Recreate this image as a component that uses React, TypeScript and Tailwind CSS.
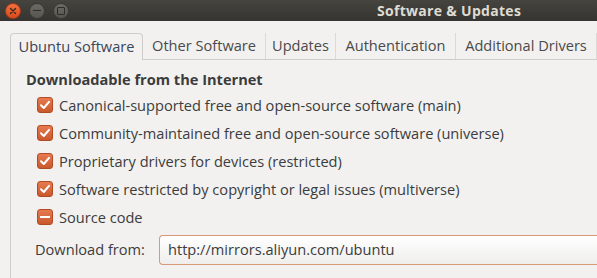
import React from 'react';

const sources = [
  { label: 'Canonical-supported free and open-source software (main)', state: 'checked' },
  { label: 'Community-maintained free and open-source software (universe)', state: 'checked' },
  { label: 'Proprietary drivers for devices (restricted)', state: 'checked' },
  { label: 'Software restricted by copyright or legal issues (multiverse)', state: 'checked' },
  { label: 'Source code', state: 'mixed' },
];

const tabs = [
  { label: 'Other Software', w: 'w-[123px]' },
  { label: 'Updates', w: 'w-[70px]' },
  { label: 'Authentication', w: 'w-[120px]' },
  { label: 'Additional Drivers', w: 'w-[141px]' },
];

function CheckBox({ state }: { state: string }) {
  return (
    <div className="w-4 h-4 rounded-[3px] border border-[#b24b22] bg-gradient-to-b from-[#e77a50] to-[#c9582c] flex items-center justify-center shrink-0">
      {state === 'checked' ? (
        <svg width="12" height="12" viewBox="0 0 12 12">
          <path d="M2 6.2 L4.8 9 L10 2.8" fill="none" stroke="#fff" strokeWidth="2" strokeLinecap="round" strokeLinejoin="round" />
        </svg>
      ) : (
        <div className="w-[10px] h-[2px] bg-white" />
      )}
    </div>
  );
}

export default function App() {
  return (
    <div className="w-[597px] h-[278px] overflow-hidden bg-[#f2f1f0] text-[#3c3c3c]" style={{ fontFamily: '"Open Sans", "DejaVu Sans", sans-serif' }}>
      {/* Title bar */}
      <div className="h-[21px] bg-gradient-to-b from-[#45443f] to-[#353430] flex items-center relative">
        <div className="flex items-center gap-[8px] pl-[5px]">
          <div className="w-4 h-4 rounded-full bg-gradient-to-b from-[#f0703f] to-[#dc4a18] border border-[#a8391a] flex items-center justify-center">
            <svg width="8" height="8" viewBox="0 0 8 8">
              <path d="M1.5 1.5 L6.5 6.5 M6.5 1.5 L1.5 6.5" stroke="#3a2a24" strokeWidth="1.4" strokeLinecap="round" />
            </svg>
          </div>
          <div className="w-4 h-4 rounded-full bg-gradient-to-b from-[#6b6a66] to-[#56554f] border border-[#3a3935] flex items-center justify-center">
            <div className="w-[8px] h-[1.5px] bg-[#2e2d29]" />
          </div>
          <div className="w-4 h-4 rounded-full bg-gradient-to-b from-[#6b6a66] to-[#56554f] border border-[#3a3935] flex items-center justify-center">
            <div className="w-[8px] h-[8px] border-[1.5px] border-[#2e2d29] rounded-[1px]" />
          </div>
        </div>
        <div className="absolute left-[377px] top-0 h-full flex items-center text-[14px] font-bold text-[#dfdbd2] tracking-[0.3px]">
          Software &amp; Updates
        </div>
      </div>

      {/* Tabs */}
      <div className="pl-[10px] pt-[13px]">
        <div className="flex items-end h-[26px] border-b border-[#cfcdca]">
          <div className="w-[133px] h-[27px] -mb-px bg-[#f2f1f0] border border-b-0 border-[#cfcdca] rounded-t-[4px] flex items-center justify-center text-[14.6px] text-[#3a4658]">
            Ubuntu Software
          </div>
          {tabs.map((t) => (
            <div key={t.label} className={`${t.w} h-[26px] border-r border-[#dcdad6] flex items-center justify-center text-[14.6px] text-[#4a4a4a] shrink-0`}>
              {t.label}
            </div>
          ))}
        </div>

        {/* Panel */}
        <div className="border-l border-[#cfcdca] h-[220px] pl-[15px] pt-[10px]">
          <div className="font-bold text-[14.6px] text-[#3c3c3c] h-[18px] leading-[18px]">Downloadable from the Internet</div>
          <div className="pl-[11px] pt-[9px] flex flex-col gap-[12px]">
            {sources.map((s) => (
              <div key={s.label} className="flex items-center gap-[6px] h-4 text-[14.6px]">
                <CheckBox state={s.state} />
                <span className="leading-4">{s.label}</span>
              </div>
            ))}
          </div>
          <div className="flex items-center mt-[10px] pl-[9px]">
            <span className="text-[14.6px] w-[124px]">Download from:</span>
            <div className="flex-1 h-[30px] -mr-[10px] rounded-l-[4px] border border-r-0 border-[#d6997a] bg-gradient-to-b from-white to-[#efeeed] flex items-center pl-[8px] text-[14.6px]">
              http://mirrors.aliyun.com/ubuntu
            </div>
          </div>
        </div>
      </div>
    </div>
  );
}
